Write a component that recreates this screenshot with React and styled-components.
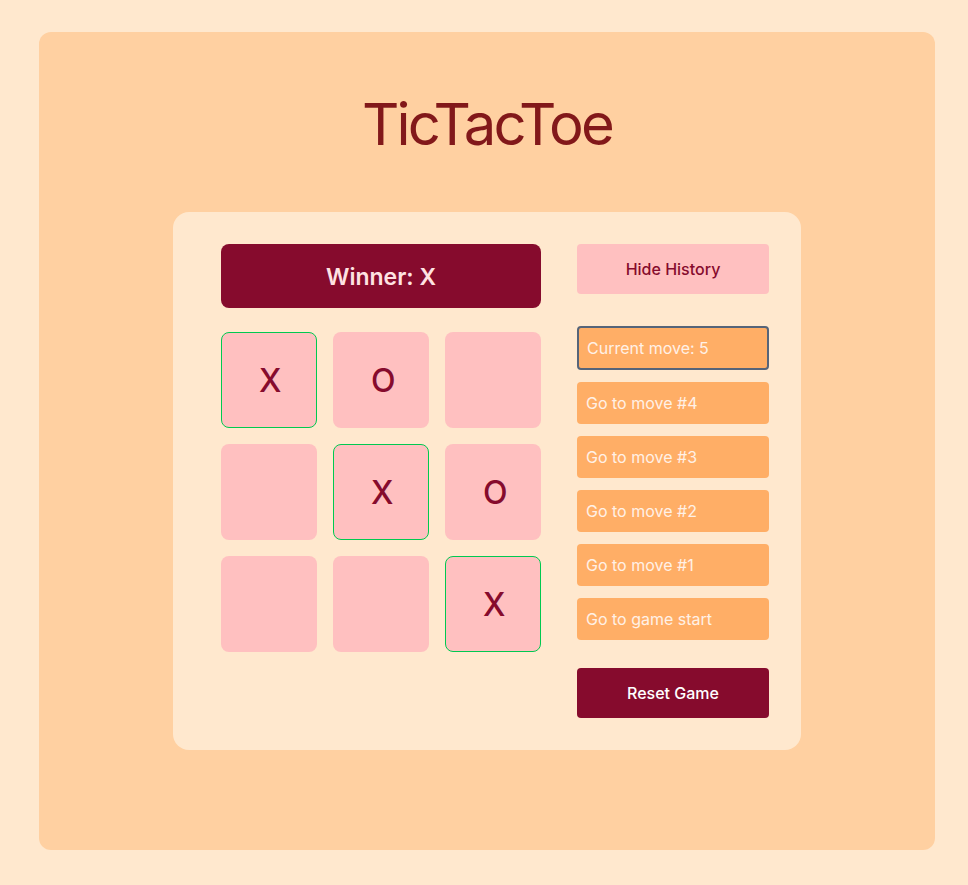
import React, { useState } from "react";
import styled, { createGlobalStyle } from "styled-components";

const GlobalStyle = createGlobalStyle`
  *, *::before, *::after { box-sizing: border-box; }
  body {
    margin: 0;
    min-height: 100vh;
    background: #ffe8ce;
    font-family: Inter, "Liberation Sans", sans-serif;
    font-size: 16px;
    line-height: 24px;
  }
  button { font: inherit; border: 0; cursor: pointer; }
`;

const Page = styled.div`
  min-height: 100vh;
  padding: 32px 33px 35px 39px;
  display: flex;
`;

const Panel = styled.main`
  flex: 1;
  display: flex;
  flex-direction: column;
  align-items: center;
  padding: 60px 32px 100px;
  border-radius: 12px;
  background: #ffd0a1;
`;

const Title = styled.h1`
  margin: 0 0 56px;
  color: #82181a;
  font-size: 58px;
  line-height: 64px;
  font-weight: 400;
  letter-spacing: -0.05em;
`;

const Game = styled.section`
  display: flex;
  gap: 36px;
  padding: 32px 32px 32px 48px;
  border-radius: 16px;
  background: #ffe8ce;
`;

const Play = styled.div`
  width: 320px;
`;

const Status = styled.h2`
  margin: 0 0 24px;
  padding: 17px 16px 15px;
  border-radius: 8px;
  background: #860b2d;
  color: #ffe2e2;
  font-size: 23px;
  line-height: 32px;
  font-weight: 600;
  text-align: center;
`;

const Board = styled.div`
  display: grid;
  grid-template-columns: repeat(3, 1fr);
  gap: 16px;
`;

const Square = styled.button`
  aspect-ratio: 1;
  padding: 2px 0 0 37px;
  border-radius: 8px;
  background: #ffc0c0;
  color: #860b2d;
  text-align: left;
  && {
    border: 1px solid ${(p) => (p.$winning ? "#00c950" : "transparent")};
    font-size: 32px;
    font-weight: 500;
    line-height: 40px;
  }
`;

const Side = styled.aside`
  width: 192px;
  display: flex;
  flex-direction: column;
`;

const Action = styled.button`
  && { font-weight: 500; }
  height: 50px;
  border-radius: 4px;
  background: ${(p) => (p.$dark ? "#860b2d" : "#ffc0c0")};
  color: ${(p) => (p.$dark ? "#ffffff" : "#860b2d")};
`;

const Moves = styled.ol`
  list-style: none;
  margin: 32px 0 28px;
  padding: 0;
  display: flex;
  flex-direction: column;
  gap: 12px;
`;

const Current = styled.div`
  padding: 8px;
  border: 2px solid #566479;
  border-radius: 4px;
  background: #ffae66;
  color: #fff1e6;
`;

const Move = styled.button`
  display: block;
  width: 100%;
  height: 42px;
  padding: 8px 9px;
  border-radius: 4px;
  background: #ffae66;
  color: #fff1e6;
  text-align: left;
`;

const cells = ["X", "O", "", "", "X", "O", "", "", "X"];
const winning = [0, 4, 8];
const moves = [4, 3, 2, 1, 0];

export default function App() {
  const [open, setOpen] = useState(true);
  return (
    <Page>
      <GlobalStyle />
      <Panel>
        <Title>TicTacToe</Title>
        <Game>
          <Play>
            <Status>Winner: X</Status>
            <Board>
              {cells.map((mark, i) => (
                <Square
                  key={i}
                  $winning={winning.includes(i)}
                  aria-label={`Square ${i + 1}${mark ? `, ${mark}` : ", empty"}`}
                >
                  {mark}
                </Square>
              ))}
            </Board>
          </Play>
          <Side>
            <Action aria-expanded={open} onClick={() => setOpen(!open)}>
              {open ? "Hide History" : "Show History"}
            </Action>
            {open && (
              <Moves>
                <li>
                  <Current aria-current="step">Current move: 5</Current>
                </li>
                {moves.map((n) => (
                  <li key={n}>
                    <Move>{n ? `Go to move #${n}` : "Go to game start"}</Move>
                  </li>
                ))}
              </Moves>
            )}
            <Action $dark>Reset Game</Action>
          </Side>
        </Game>
      </Panel>
    </Page>
  );
}
